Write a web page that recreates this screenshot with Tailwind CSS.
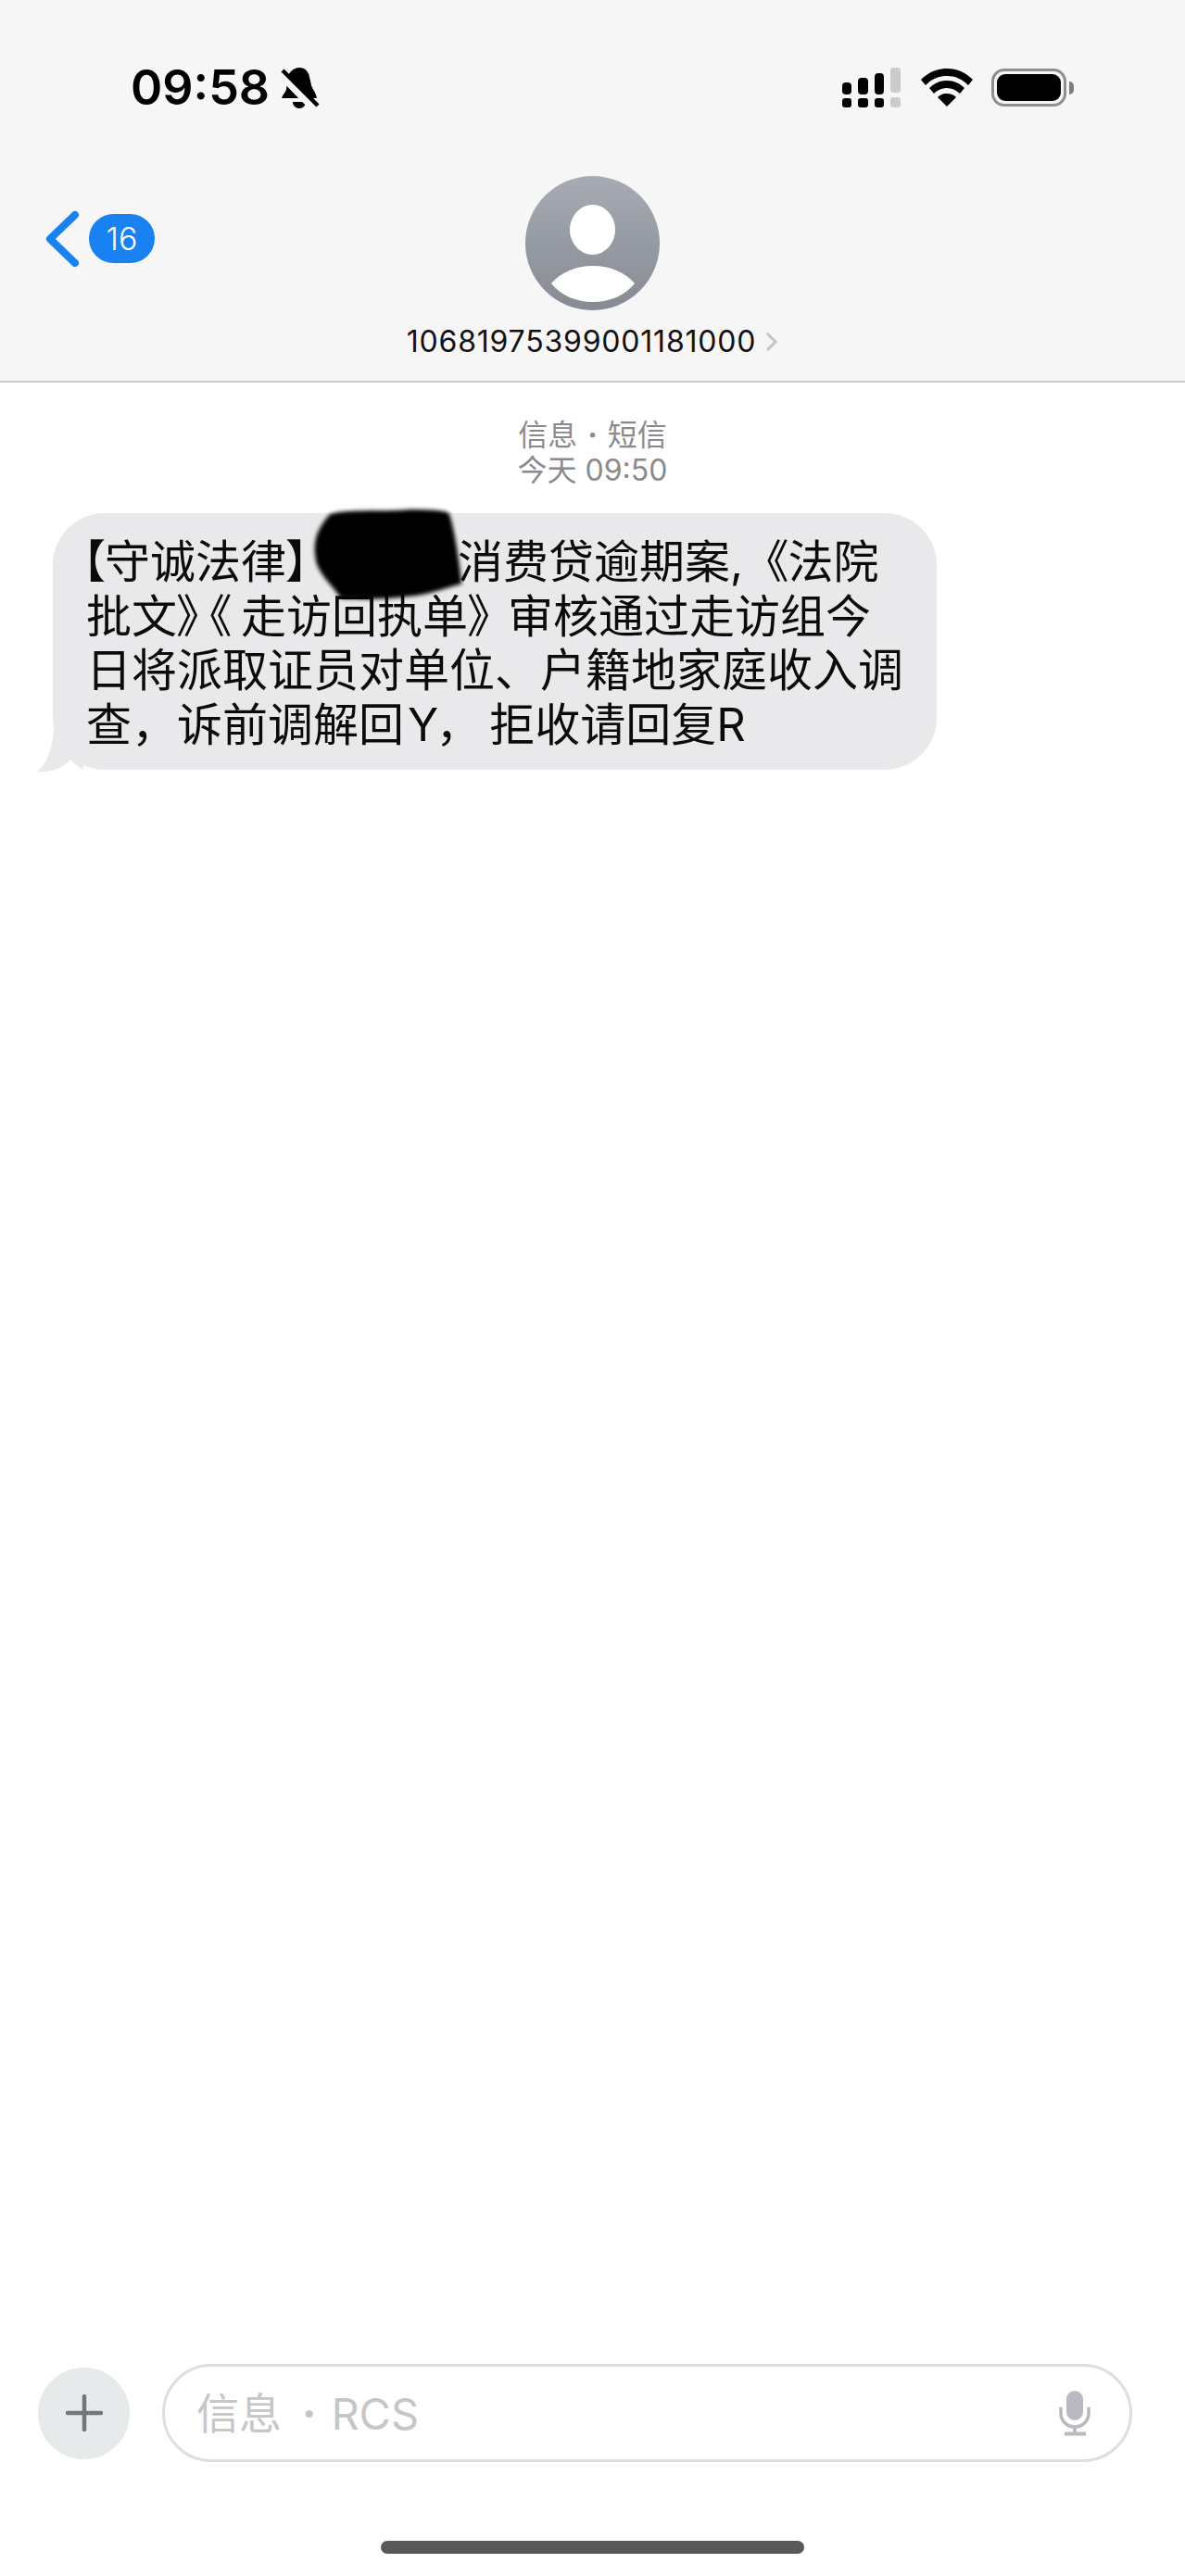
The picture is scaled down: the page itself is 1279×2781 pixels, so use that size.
<!DOCTYPE html>
<html lang="zh">
<head>
<meta charset="utf-8">
<script src="https://cdn.jsdelivr.net/npm/@tailwindcss/browser@4"></script>
</head>
<body class="bg-white">
<div class="w-[1279px] h-[2781px] flex flex-col bg-white text-black font-['Inter','Noto_Sans_CJK_SC',sans-serif] overflow-hidden">
  <header class="h-[413px] shrink-0 flex flex-col bg-[#f6f6f6] border-b-2 border-[#c9c9c9]">
    <div class="mt-[72px] h-[45px] flex justify-between items-center pl-[141px] pr-[120px]">
      <div class="flex items-center gap-[12px]">
        <span class="text-[52px] leading-[45px] font-semibold">09:58</span>
        <svg class="w-[42px] h-[45px]" viewBox="0 0 42 45" fill="none">
          <path d="M20 1c6 0 10 4 11 10l2 9c1 4 5 8 6 14H1c1-4 4-6 5-9l1-11C8 6 14 1 20 1z" fill="#000"/>
          <path d="M13 38h14c0 4-3 7-7 7s-7-3-7-7z" fill="#000"/>
          <path d="M1 8l38 39" stroke="#f6f6f6" stroke-width="10"/>
          <path d="M2 4l38 38" stroke="#000" stroke-width="4.500"/>
        </svg>
      </div>
      <div class="flex items-center">
        <svg class="w-[63px] h-[43px]" viewBox="0 0 63 43">
          <g fill="#000">
            <rect x="0" y="16" width="10" height="13" rx="4"/>
            <rect x="17" y="11" width="11" height="18" rx="4"/>
            <rect x="35" y="6" width="10" height="23" rx="4"/>
            <rect x="0" y="33" width="10" height="10" rx="3"/>
            <rect x="17" y="33" width="11" height="10" rx="3"/>
            <rect x="35" y="33" width="10" height="10" rx="3"/>
          </g>
          <rect x="52" y="0" width="11" height="27" rx="3" fill="#cbcbcb"/>
          <rect x="52" y="32" width="11" height="11" rx="3" fill="#cbcbcb"/>
        </svg>
        <svg class="ml-[22px] w-[56px] h-[41px]" viewBox="0 0 56 41" fill="#000">
          <path d="M28 0C17 0 8 4 0 12l5 6C12 11 19 8 28 8s16 3 23 10l5-6C48 4 39 0 28 0z"/>
          <path d="M28 13c-8 0-14 3-19 8l5 6c4-4 9-6 14-6s10 2 14 6l5-6c-5-5-11-8-19-8z"/>
          <path d="M28 27c-4 0-7 1-10 4l10 10 10-10c-3-3-6-4-10-4z"/>
        </svg>
        <div class="ml-[20px] flex items-center">
          <div class="w-[81px] h-[41px] rounded-[14px] border-[3px] border-[#8e8e8e] p-[3px]">
            <div class="w-full h-full rounded-[9px] bg-black"></div>
          </div>
          <div class="ml-[3px] w-[5px] h-[14px] rounded-r-full bg-[#7d7d7d]"></div>
        </div>
      </div>
    </div>
    <div class="mt-[73px] h-[145px] grid grid-cols-[1fr_145px_1fr]">
      <div class="flex items-center pl-[48px] pb-[10px]">
        <svg class="w-[38px] h-[62px]" viewBox="0 0 38 62" fill="none">
          <path d="M33 5L6 31l27 26" stroke="#1a82f0" stroke-width="8" stroke-linecap="round" stroke-linejoin="round"/>
        </svg>
        <div class="ml-[10px] w-[71px] h-[53px] rounded-full bg-[#1a82f0] flex items-center justify-center text-[34px] font-light leading-none text-white">16</div>
      </div>
      <svg class="w-[145px] h-[145px]" viewBox="0 0 145 145">
        <defs>
          <linearGradient id="av" x1="0" y1="0" x2="0" y2="1">
            <stop offset="0" stop-color="#a7abb4"/>
            <stop offset="1" stop-color="#858a93"/>
          </linearGradient>
        </defs>
        <circle cx="72.500" cy="72.500" r="72.500" fill="url(#av)"/>
        <ellipse cx="72.500" cy="58" rx="24.500" ry="27" fill="#fff"/>
        <path d="M28 116c10-12 27-19 45-19s35 7 45 19c-10 13-27 20-45 20s-35-7-45-20z" fill="#fff"/>
      </svg>
      <div></div>
    </div>
    <div class="mt-[18px] flex justify-center items-center gap-[10px]">
      <span class="text-[32px] leading-[32px] text-[#111] tracking-[0.8px]">10681975399001181000</span>
      <svg class="w-[14px] h-[22px]" viewBox="0 0 14 22" fill="none"><path d="M2 2l9 9-9 9" stroke="#c4c4c6" stroke-width="3"/></svg>
    </div>
  </header>

  <main class="flex-1 flex flex-col">
    <div class="mt-[38px] flex flex-col items-center text-[32px] leading-[38px] text-[#8a8a8e]">
      <div>信息 <span class="mx-[2px] font-bold">·</span> 短信</div>
      <div>今天 09:50</div>
    </div>
    <div class="relative mt-[27px] ml-[57px] w-[954px] h-[277px] rounded-[56px] bg-[#e9e9eb] pt-[24px] pl-[36px] text-[49px] leading-[58.5px] whitespace-nowrap text-[#0b0b0b]">
      <div class="flex"><span class="-ml-[26px] w-[46px] text-right [font-feature-settings:'palt']">【</span><span>守诚法律</span><span class="w-[23px] [font-feature-settings:'palt']">】</span><span class="ml-[162px]">消费贷逾期案</span><span class="w-[40px] [font-feature-settings:'palt']">,</span><span class="[font-feature-settings:'palt'] -ml-[2px]">《</span><span>法院</span></div>
      <div class="flex"><span>批文</span><span class="[font-feature-settings:'palt'] w-[34px]">》</span><span class="[font-feature-settings:'palt'] w-[35px]">《</span><span>走访回执单</span><span class="[font-feature-settings:'palt'] w-[43px]">》</span><span>审核通过走访组今</span></div>
      <div>日将派取证员对单位、户籍地家庭收入调</div>
      <div class="flex"><span>查&#xFF0C;诉前调解回</span><span class="ml-[4px]">Y</span><span class="w-[55px] [font-feature-settings:'palt']">&#xFF0C;</span><span>拒收请回复</span><span>R</span></div>
      <svg class="absolute -left-[17px] -bottom-[3px] w-[50px] h-[55px]" viewBox="0 0 50 55"><path d="M18 2C18 27 12 44 0 54c12 1 26-2 36-13 4 5 9 8 14 11V2z" fill="#e9e9eb"/></svg>
      <svg class="absolute left-[277px] -top-[5px] w-[168px] h-[100px] blur-[2px]" viewBox="0 0 170 102"><path d="M22 6C45 0 80 4 110 1c22 0 38 1 43 4 6 18 10 45 14 78-20 5-38 13-60 14-22 3-50 3-73 2C25 85 12 75 7 60 4 45 2 28 22 6z" fill="#000"/></svg>
    </div>
    <div class="mt-auto flex items-center pl-[41px]">
      <div class="w-[99px] h-[99px] rounded-full bg-[#e7eaea] flex items-center justify-center">
        <svg class="w-[40px] h-[40px]" viewBox="0 0 40 40" fill="none"><path d="M20 2v36M2 20h36" stroke="#727878" stroke-width="4.500" stroke-linecap="round"/></svg>
      </div>
      <div class="ml-[35px] w-[1047px] h-[106px] rounded-full border-[3px] border-[#dedede] flex items-center justify-between pl-[34px] pr-[42px]">
        <span class="flex items-center text-[46px] leading-none text-[#c6c6c6]"><span>信息</span><span class="ml-[22px] font-bold">·</span><span class="ml-[16px] text-[47px]">RCS</span></span>
        <svg class="w-[34px] h-[49px]" viewBox="0 0 34 49" fill="none">
          <rect x="8" y="0" width="18" height="32" rx="9" fill="#b9b9bf"/>
          <path d="M2 19v5c0 9 7 15 15 15s15-6 15-15v-5" stroke="#b9b9bf" stroke-width="3.500" stroke-linecap="round"/>
          <path d="M17 39v7M6 46.500h23" stroke="#b9b9bf" stroke-width="4"/>
        </svg>
      </div>
    </div>
    <div class="mt-[85px] mb-[24px] mx-auto w-[457px] h-[14px] rounded-full bg-[#58585a]"></div>
  </main>
</div>
</body>
</html>
